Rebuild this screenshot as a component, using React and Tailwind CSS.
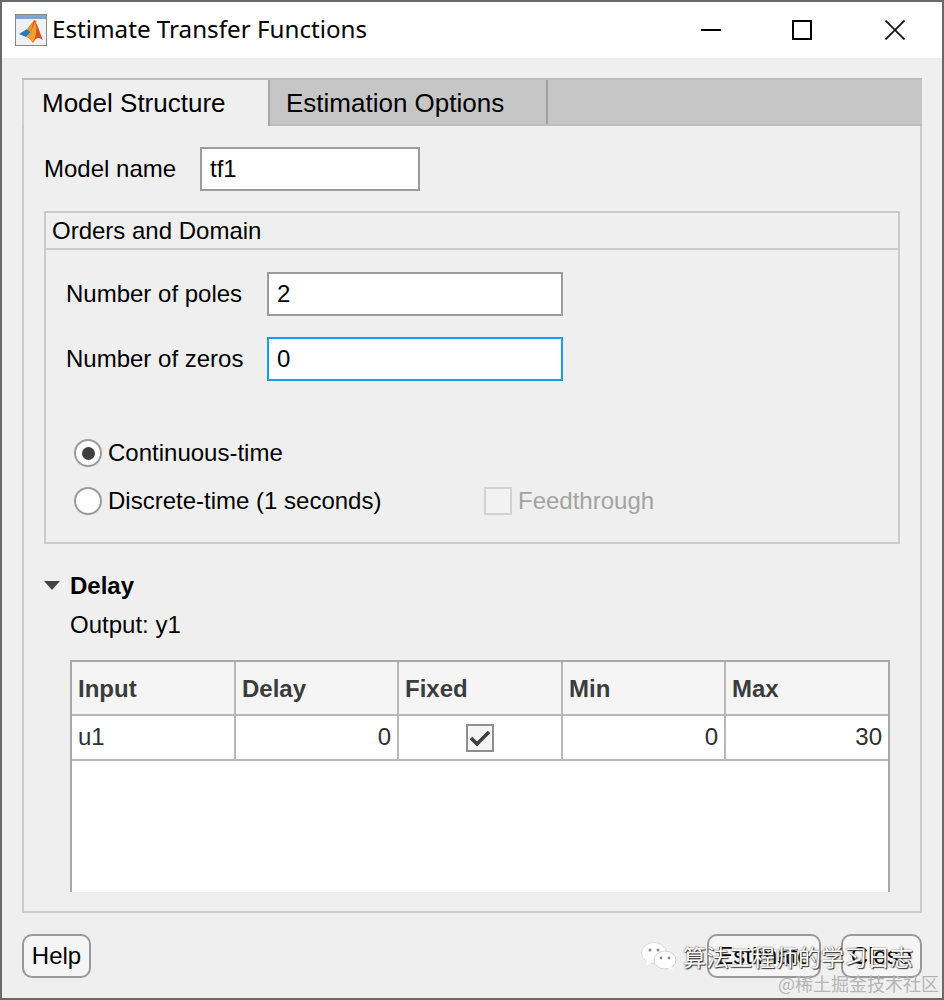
import React from "react";

const sans = { fontFamily: '"Liberation Sans", Arial, sans-serif' };

function MatlabIcon() {
  return (
    <div className="w-[32px] h-[32px] shrink-0 border border-[#8a8a8a] bg-[#f1f1f1] flex flex-col">
      <div className="h-[4px] shrink-0 bg-[#7ea6cf]" />
      <svg width="30" height="26" viewBox="0 0 30 26">
        <path d="M3 15 L11 10 L15 13 L10 18 Z" fill="#2b78c2" />
        <path d="M11 10 L18 1 L21 2 L15 13 Z" fill="#e8912a" />
        <path d="M18 1 C22 5 24 15 27 21 C23 19 21 17 17 24 C15 21 13 18 10 18 L15 13 Z" fill="#d9531e" />
        <path d="M19 3 C21 9 21 15 17 24 C15 21 13 18 10 18 L15 13 Z" fill="#f0a030" />
      </svg>
    </div>
  );
}

function TextField({ value, width, focused }) {
  return (
    <div
      className={`h-[44px] bg-white border-2 flex items-center px-[8px] text-[24px] text-black ${focused ? "border-[#1a9cf0]" : "border-[#9c9c9c]"}`}
      style={{ width }}
    >
      {value}
    </div>
  );
}

function Radio({ checked }) {
  return (
    <div className="w-[28px] h-[28px] rounded-full bg-white border-2 border-[#9c9c9c] flex items-center justify-center shrink-0">
      {checked && <div className="w-[13px] h-[13px] rounded-full bg-[#3f3f3f]" />}
    </div>
  );
}

function HeaderCell({ children, last }) {
  return (
    <div className={`flex items-center pl-[6px] pt-[2px] font-bold text-[24px] text-[#3c3c3c] border-[#b8b8b8] ${last ? "" : "border-r-2"}`}>
      {children}
    </div>
  );
}

function Cell({ children, className = "", last }) {
  return (
    <div className={`flex items-center px-[6px] text-[24px] text-[#2e2e2e] border-[#b8b8b8] ${last ? "" : "border-r-2"} ${className}`}>
      {children}
    </div>
  );
}

function Btn({ children, className = "" }) {
  return (
    <div className={`h-[44px] rounded-[10px] border-2 border-[#999999] bg-[#f5f5f5] flex items-center justify-center text-[24px] text-black ${className}`}>
      {children}
    </div>
  );
}

export default function App() {
  return (
    <div className="relative w-[944px] h-[1000px] border-2 border-[#6a6a6a] bg-[#efefef] overflow-hidden flex flex-col" style={sans}>
      {/* Title bar */}
      <div className="h-[56px] shrink-0 bg-white flex items-center pl-[13px]">
        <MatlabIcon />
        <span className="ml-[5px] -mt-[1px] text-[24.2px] text-black" style={{ fontFamily: '"Noto Sans", "Open Sans", sans-serif' }}>
          Estimate Transfer Functions
        </span>
        <div className="ml-auto flex items-center h-full">
          <svg width="20" height="20" viewBox="0 0 20 20" className="mr-[71px] -mt-[1px]">
            <rect x="0" y="9" width="20" height="2" fill="#000" />
          </svg>
          <svg width="20" height="20" viewBox="0 0 20 20" className="mr-[73px] -mt-[1px]">
            <rect x="1" y="1" width="18" height="18" fill="none" stroke="#000" strokeWidth="2" />
          </svg>
          <svg width="20" height="20" viewBox="0 0 20 20" className="mr-[37px] -mt-[1px]">
            <path d="M0.5 0.5 L19.5 19.5 M19.5 0.5 L0.5 19.5" fill="none" stroke="#111" strokeWidth="1.7" />
          </svg>
        </div>
      </div>

      {/* Tab panel */}
      <div className="mt-[20px] mx-[20px] h-[835px] flex flex-col shrink-0">
        <div className="h-[48px] shrink-0 flex bg-[#c6c6c6] border-t-2 border-[#bdbdbd] border-b-2 relative">
          <div className="w-[248px] -mb-[2px] bg-[#efefef] border-l-2 border-[#cfcfcf] border-r-2 border-r-[#a8a8a8] flex items-center pl-[18px] text-[26px] text-black">
            Model Structure
          </div>
          <div className="w-[278px] border-r-2 border-[#a0a0a0] flex items-center pl-[16px] pt-[2px] text-[26px] text-black">
            Estimation Options
          </div>
        </div>

        <div className="flex-1 min-h-0 border-2 border-t-0 border-[#cbcbcb] flex flex-col px-[20px] pt-[21px] pb-[19px] overflow-hidden">
          {/* Model name */}
          <div className="flex items-center h-[44px] shrink-0 text-[24px] text-black">
            <span className="w-[156px]">Model name</span>
            <TextField value="tf1" width={220} />
          </div>

          {/* Orders and Domain */}
          <div className="mt-[20px] h-[333px] shrink-0 border-2 border-[#cbcbcb] flex flex-col">
            <div className="h-[37px] shrink-0 border-b-2 border-[#cbcbcb] flex items-center pl-[6px] text-[24px] text-black">
              Orders and Domain
            </div>
            <div className="pl-[20px] pt-[22px] flex flex-col">
              <div className="flex items-center text-[24px] text-black">
                <span className="w-[201px]">Number of poles</span>
                <TextField value="2" width={296} />
              </div>
              <div className="mt-[21px] flex items-center text-[24px] text-black">
                <span className="w-[201px]">Number of zeros</span>
                <TextField value="0" width={296} focused />
              </div>
              <div className="mt-[58px] pl-[8px] flex items-center gap-[6px] text-[24px] text-black h-[28px]">
                <Radio checked />
                <span>Continuous-time</span>
              </div>
              <div className="mt-[20px] pl-[8px] flex items-center text-[24px] text-black h-[28px]">
                <Radio />
                <span className="ml-[6px] w-[376px]">Discrete-time (1 seconds)</span>
                <div className="w-[28px] h-[28px] border-2 border-[#d2d2d2] bg-[#f2f2f2] shrink-0" />
                <span className="ml-[6px] text-[#a3a3a3]">Feedthrough</span>
              </div>
            </div>
          </div>

          {/* Delay */}
          <div className="mt-[28px] flex items-center h-[28px] shrink-0">
            <svg width="16" height="10" viewBox="0 0 16 10">
              <path d="M0 0 H16 L8 9 Z" fill="#444" />
            </svg>
            <span className="ml-[10px] font-bold text-[24px] text-black">Delay</span>
          </div>
          <div className="mt-[10px] ml-[26px] h-[30px] shrink-0 flex items-center text-[24px] text-black">Output: y1</div>

          {/* Table */}
          <div className="mt-[20px] ml-[26px] w-[820px] flex-1 min-h-0 border-2 border-b-0 border-[#a8a8a8] bg-white flex flex-col">
            <div className="h-[54px] shrink-0 bg-[#f5f5f5] border-b-2 border-[#b8b8b8] grid grid-cols-[164px_163px_164px_163px_1fr]">
              <HeaderCell>Input</HeaderCell>
              <HeaderCell>Delay</HeaderCell>
              <HeaderCell>Fixed</HeaderCell>
              <HeaderCell>Min</HeaderCell>
              <HeaderCell last>Max</HeaderCell>
            </div>
            <div className="h-[45px] shrink-0 border-b-2 border-[#b8b8b8] grid grid-cols-[164px_163px_164px_163px_1fr]">
              <Cell className="pb-[2px]">u1</Cell>
              <Cell className="justify-end pb-[2px]">0</Cell>
              <Cell className="justify-center">
                <div className="w-[28px] h-[28px] border-2 border-[#8f8f8f] bg-[#f5f5f5] flex items-center justify-center">
                  <svg width="22" height="18" viewBox="0 0 22 18">
                    <path d="M2 9 L8 15 L20 3" fill="none" stroke="#3f3f3f" strokeWidth="3.6" />
                  </svg>
                </div>
              </Cell>
              <Cell className="justify-end pb-[2px]">0</Cell>
              <Cell last className="justify-end pb-[2px]">30</Cell>
            </div>
          </div>
        </div>
      </div>

      {/* Bottom buttons */}
      <div className="mt-[21px] mx-[20px] flex items-center">
        <Btn className="w-[69px]">Help</Btn>
        <Btn className="ml-auto w-[114px]">Estimate</Btn>
        <Btn className="ml-[20px] w-[81px]">Close</Btn>
      </div>

      {/* Watermark overlay */}
      <div className="absolute left-[639px] top-[937px] flex items-center gap-[6px]">
        <svg width="36" height="30" viewBox="0 0 36 28">
          <ellipse cx="13" cy="11" rx="12.5" ry="10.5" fill="#fff" stroke="#c8c8c8" strokeWidth="0.6" />
          <path d="M6 18 L5 24 L11 20 Z" fill="#fff" />
          <ellipse cx="24" cy="18" rx="11" ry="9" fill="#fff" stroke="#c8c8c8" strokeWidth="0.8" />
          <path d="M30 24 L32 28 L26 26 Z" fill="#fff" />
          <circle cx="9" cy="8" r="1.5" fill="#888" />
          <circle cx="17" cy="8" r="1.5" fill="#888" />
          <circle cx="20" cy="16" r="1.4" fill="#888" />
          <circle cx="28" cy="16" r="1.4" fill="#888" />
        </svg>
        <span
          className="text-[23px] text-white whitespace-nowrap"
          style={{ fontFamily: '"Noto Sans CJK SC", sans-serif', textShadow: "0 0 1.5px #333, 1px 1px 1px #333" }}
        >
          算法工程师的学习日志
        </span>
      </div>
      <span
        className="absolute left-[776px] top-[968px] text-[18px] text-[#b5b5b5] whitespace-nowrap"
        style={{ fontFamily: '"Noto Sans CJK SC", sans-serif' }}
      >
        @稀土掘金技术社区
      </span>
    </div>
  );
}
